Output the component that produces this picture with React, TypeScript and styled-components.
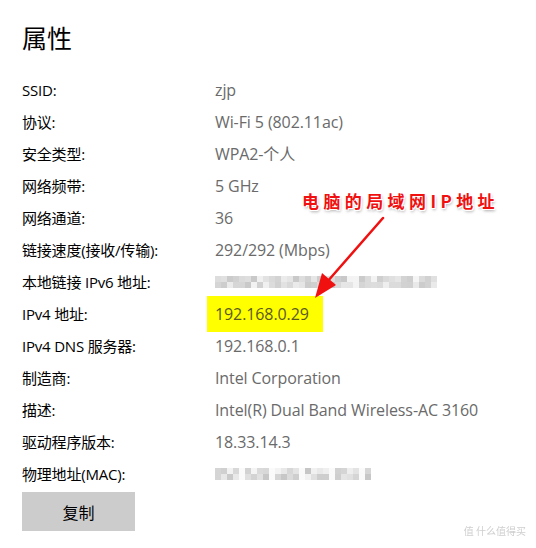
import * as React from "react";
import styled, {createGlobalStyle} from "styled-components";

const GlobalStyle = createGlobalStyle`
  html, body {
    margin: 0;
    background: #ffffff;
  }
  body {
    font-family: "Open Sans", "Noto Sans CJK SC", sans-serif;
  }
`;

const Page = styled.div`
  position: relative;
  width: 536px;
  height: 548px;
  padding: 19px 0 0 22px;
  box-sizing: border-box;
  overflow: hidden;
`;

const Title = styled.h1`
  margin: 0 0 19px;
  height: 36px;
  line-height: 36px;
  font-family: "Noto Sans CJK SC", sans-serif;
  font-size: 25px;
  font-weight: 400;
  color: #000;
`;

const Grid = styled.div`
  display: grid;
  grid-template-columns: 193px auto;
  grid-auto-rows: 32px;
  align-items: center;
`;

const Label = styled.div`
  font-family: "Open Sans", "Noto Sans CJK SC", sans-serif;
  font-size: 15px;
  line-height: 20px;
  color: #000;
  letter-spacing: -0.2px;
  white-space: nowrap;
`;

const Value = styled.div<{ $highlight?: boolean }>`
  justify-self: start;
  font-family: "Open Sans", "Noto Sans CJK SC", sans-serif;
  font-size: 16px;
  line-height: 20px;
  color: #6a6a6a;
  letter-spacing: -0.1px;
  white-space: nowrap;
  ${p => p.$highlight && `
    background: #ffff00;
    margin-left: -8px;
    padding: 8px 14px 8px 8px;
    color: #5a5a20;
  `}
`;

const Mosaic = styled.div<{ $cols: number }>`
  display: grid;
  grid-template-columns: repeat(${p => p.$cols}, 6px);
  grid-template-rows: 6px 6px;
  filter: blur(0.3px);
`;

const Pixel = styled.span<{ $shade: number }>`
  background: rgb(${p => p.$shade}, ${p => p.$shade}, ${p => p.$shade});
`;

const CopyButton = styled.button`
  margin-top: 2px;
  width: 113px;
  height: 39px;
  border: none;
  background: #cccccc;
  font-family: "Noto Sans CJK SC", sans-serif;
  font-size: 16px;
  color: #000;
  padding: 0;
`;

const Callout = styled.div`
  position: absolute;
  left: 302px;
  top: 188px;
  font-family: "Noto Sans CJK SC", sans-serif;
  font-weight: 700;
  font-size: 17px;
  letter-spacing: 4.4px;
  color: #f01010;
  white-space: nowrap;
  text-shadow: 1px 1px 0 #fff, -1px -1px 0 #fff, 1px -1px 0 #fff, -1px 1px 0 #fff, 1px 2px 3px rgba(0,0,0,0.35);
`;

const Arrow = styled.svg`
  position: absolute;
  left: 300px;
  top: 210px;
`;

const Watermark = styled.div`
  position: absolute;
  right: 10px;
  bottom: 10px;
  font-family: "Noto Sans CJK SC", sans-serif;
  font-size: 10px;
  color: #cfcfcf;
  filter: blur(0.4px);
`;

const rows: Array<[string, string]> = [
  ["SSID:", "zjp"],
  ["协议:", "Wi-Fi 5 (802.11ac)"],
  ["安全类型:", "WPA2-个人"],
  ["网络频带:", "5 GHz"],
  ["网络通道:", "36"],
  ["链接速度(接收/传输):", "292/292 (Mbps)"],
];

// pseudo-random greys for the blurred (mosaic) values
function shades(cols: number, seed: number, gapEvery = 0) {
  const out: number[] = [];
  let s = seed;
  for (let r = 0; r < 2; r++) {
    for (let c = 0; c < cols; c++) {
      s = (s * 9301 + 49297) % 233280;
      const isGap = gapEvery > 0 && c % gapEvery === gapEvery - 1;
      out.push(isGap ? 250 : 198 + Math.floor((s / 233280) * 48));
    }
  }
  return out;
}

const ipv6 = shades(37, 7);
const mac = shades(26, 3, 5);

function Blur({cols, data}: { cols: number; data: number[] }) {
  return (
    <Mosaic $cols={cols}>
      {data.map((v, i) => <Pixel key={i} $shade={v}/>)}
    </Mosaic>
  );
}

export default function App() {
  return (
    <Page>
      <GlobalStyle/>
      <Title>属性</Title>
      <Grid>
        {rows.map(([k, v]) => (
          <React.Fragment key={k}>
            <Label>{k}</Label>
            <Value>{v}</Value>
          </React.Fragment>
        ))}
        <Label>本地链接 IPv6 地址:</Label>
        <Blur cols={37} data={ipv6}/>
        <Label>IPv4 地址:</Label>
        <Value $highlight>192.168.0.29</Value>
        <Label>IPv4 DNS 服务器:</Label>
        <Value>192.168.0.1</Value>
        <Label>制造商:</Label>
        <Value>Intel Corporation</Value>
        <Label>描述:</Label>
        <Value>Intel(R) Dual Band Wireless-AC 3160</Value>
        <Label>驱动程序版本:</Label>
        <Value>18.33.14.3</Value>
        <Label>物理地址(MAC):</Label>
        <Blur cols={26} data={mac}/>
      </Grid>
      <CopyButton>复制</CopyButton>

      <Callout>电脑的局域网IP地址</Callout>
      <Arrow width="100" height="100" viewBox="0 0 100 100">
        <line x1="83" y1="8" x2="27" y2="72" stroke="#f01010" strokeWidth="2.5" strokeLinecap="round"/>
        <polygon points="15,88 22,63 36,75" fill="#f01010"/>
      </Arrow>
      <Watermark>值 什么值得买</Watermark>
    </Page>
  );
}
